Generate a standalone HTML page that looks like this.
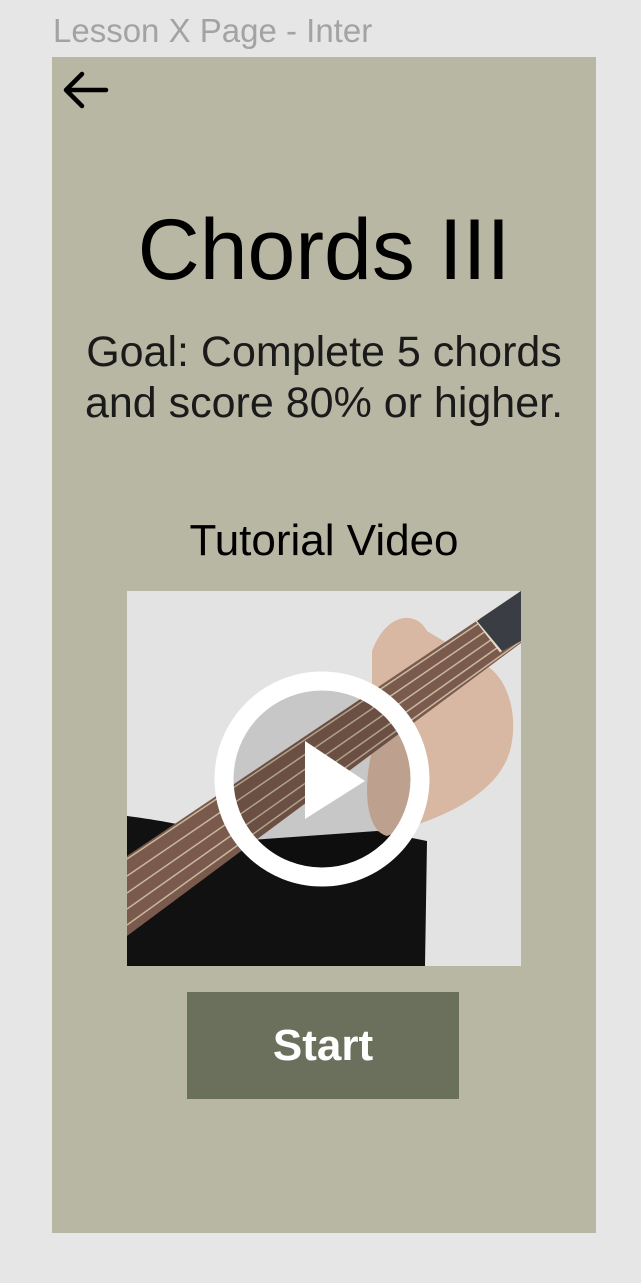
<!DOCTYPE html>
<html><head><style>
body{margin:0;width:641px;height:1283px;background:#e6e6e6;font-family:"Liberation Sans",sans-serif;position:relative;overflow:hidden}
.lbl{position:absolute;left:53px;top:12px;font-size:33px;color:#a3a3a3}
.frame{position:absolute;left:52px;top:57px;width:544px;height:1176px;background:#b8b7a3}
.c{position:absolute;left:0;width:544px;text-align:center;color:#000;white-space:nowrap}
</style></head><body>
<div class="lbl">Lesson X Page - Inter</div>
<div class="frame">
<svg style="position:absolute;left:10px;top:14px" width="48" height="40" viewBox="0 0 48 40"><path d="M4 19 H44 M20 3 L4 19 L20 35" fill="none" stroke="#000" stroke-width="4.5" stroke-linecap="round" stroke-linejoin="round"/></svg>
<div class="c" style="top:145px;font-size:86px;line-height:96px">Chords III</div>
<div class="c" style="top:270px;font-size:43px;line-height:51px;color:#1a1a1a">Goal: Complete 5 chords<br>and score 80% or higher.</div>
<div class="c" style="top:459px;font-size:44px;line-height:50px">Tutorial Video</div>
<svg style="position:absolute;left:75px;top:534px" width="394" height="375" viewBox="0 0 394 375">
<rect width="394" height="375" fill="#e3e3e3"/>
<path d="M0 225 C40 230 90 240 110 250 L250 240 L300 250 L298 375 L0 375Z" fill="#111"/>
<path d="M245 60 C260 20 290 20 300 40 L350 70 C380 80 390 120 385 150 C380 190 340 215 300 230 L260 245 C240 240 235 200 245 160Z" fill="#d8b8a2"/>
<path d="M0 265 L394 0 L394 52 L0 345Z" fill="#7a5a4c"/>
<path d="M0 268 L394 4 M0 285 L394 16 M0 302 L394 28 M0 318 L394 40 M0 334 L394 50" stroke="#c9b8a0" stroke-width="1.5"/>
<path d="M350 28 L375 60" stroke="#e6dcc8" stroke-width="5"/>
<path d="M350 30 L394 0 L394 50 L375 60Z" fill="#3a3d44"/>
<circle cx="195" cy="188" r="98" fill="rgba(0,0,0,0.12)" stroke="#fff" stroke-width="19"/>
<path d="M178 150 L178 228 L238 190Z" fill="#fff"/>
</svg>
<div style="position:absolute;left:135px;top:935px;width:272px;height:107px;background:#6b705c;color:#fff;font-weight:bold;font-size:44px;line-height:107px;text-align:center">Start</div>
</div>
</body></html>
